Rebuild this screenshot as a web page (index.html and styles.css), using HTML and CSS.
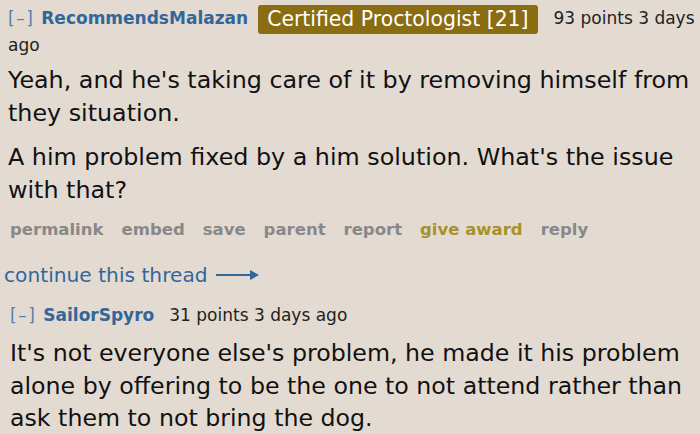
FILE: index.html
```html
<!DOCTYPE html>
<html>
<head>
<meta charset="utf-8">
<link rel="stylesheet" href="styles.css">
</head>
<body>
<div class="page">
  <div class="comment">
    <div class="tagline"><span class="expand">[–]</span><span class="author">RecommendsMalazan</span><span class="flair">Certified Proctologist [21]</span><span class="meta">93 points 3 days </span><span class="meta">ago</span></div>
    <div class="body first">
      <p>Yeah, and he's taking care of it by removing himself from they situation.</p>
      <p>A him problem fixed by a him solution. What's the issue with that?</p>
    </div>
    <ul class="buttons">
      <li>permalink</li>
      <li>embed</li>
      <li>save</li>
      <li>parent</li>
      <li>report</li>
      <li class="award">give award</li>
      <li>reply</li>
    </ul>
  </div>
  <div class="continue"><span>continue this thread</span><span class="arrow"><svg width="44" height="12" viewBox="0 0 44 12"><line x1="0" y1="6" x2="36" y2="6" stroke="#336699" stroke-width="2"/><path d="M34 1 L43 6 L34 11 Z" fill="#336699"/></svg></span></div>
  <div class="comment child">
    <div class="tagline"><span class="expand">[–]</span><span class="author">SailorSpyro</span><span class="meta">31 points 3 days ago</span></div>
    <div class="body second">
      <p>It's not everyone else's problem, he made it his problem alone by offering to be the one to not attend rather than ask them to not bring the dog.</p>
    </div>
  </div>
</div>
</body>
</html>
```
FILE: styles.css
```css
html, body {
  margin: 0;
  padding: 0;
  background: #e3dbd1;
}
body {
  font-family: "DejaVu Sans", Verdana, sans-serif;
  color: #111;
  width: 700px;
  height: 434px;
  overflow: hidden;
}
.page {
  padding: 0 4px 0 8px;
}
.tagline {
  font-size: 17px;
  line-height: 27px;
  color: #222;
  padding-top: 5px;
}
.expand {
  color: #5a7ea8;
  letter-spacing: 1.5px;
  margin-right: 7px;
}
.author {
  color: #336699;
  font-weight: bold;
  margin-right: 10px;
}
.child .author {
  margin-right: 15px;
}
.flair {
  background: #8a6d12;
  color: #fff;
  font-size: 20.4px;
  line-height: 20px;
  padding: 2px 9px 3px;
  border-radius: 3px;
  margin-right: 16px;
  vertical-align: -2px;
}
.body {
  font-size: 23.8px;
  line-height: 33px;
  padding-right: 4px;
}
.first {
  margin-top: 5px;
}
.body p {
  margin: 0;
}
.body p + p {
  margin-top: 11px;
}
.buttons {
  list-style: none;
  margin: 12px 0 0 2px;
  padding: 0;
  display: flex;
  gap: 18px;
  font-size: 16.5px;
  font-weight: bold;
  color: #888;
  line-height: 22px;
}
.buttons .award {
  color: #a8912a;
}
.continue {
  margin-top: 22px;
  margin-left: -4px;
  color: #336699;
  font-size: 20.2px;
  line-height: 24px;
  display: flex;
  align-items: center;
  gap: 8px;
}
.arrow {
  display: flex;
}
.child {
  margin-top: 15px;
  padding-left: 2px;
}
.child .tagline {
  padding-top: 0;
}
.second {
  margin-top: 8px;
  font-size: 23.7px;
  line-height: 32.5px;
}
```
